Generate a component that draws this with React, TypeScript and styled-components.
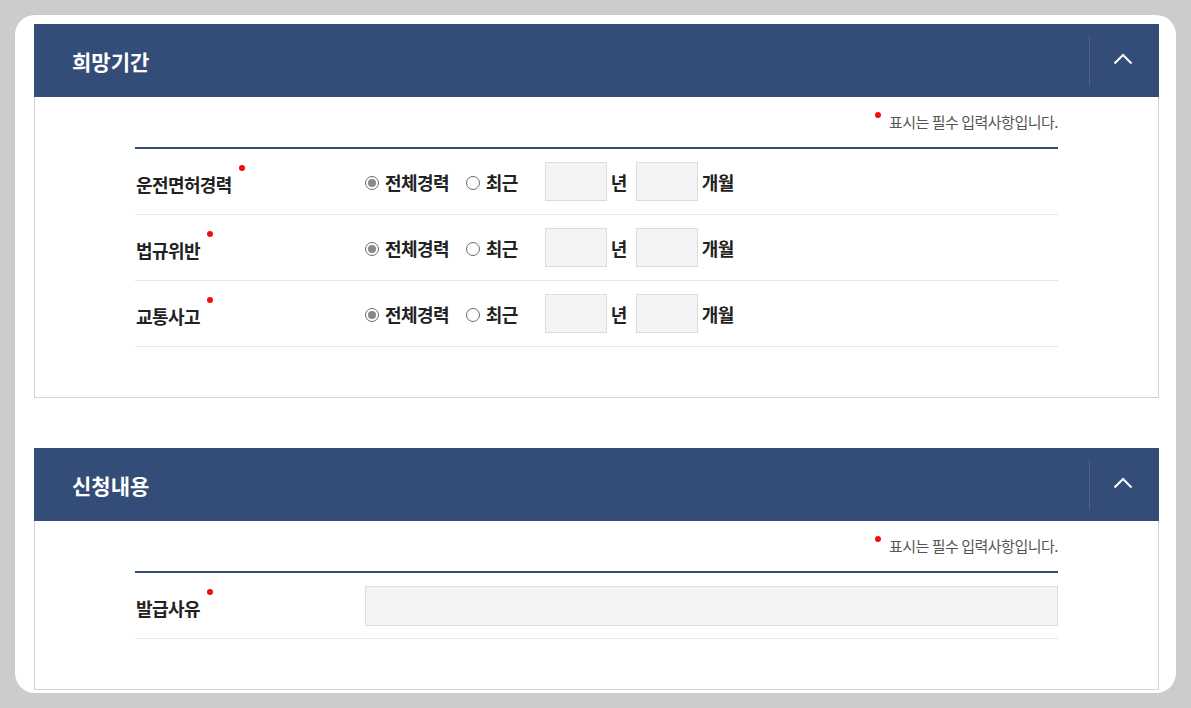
import React from 'react';
import styled, { createGlobalStyle } from 'styled-components';

const GlobalStyle = createGlobalStyle`
	html, body {
		margin: 0;
		padding: 0;
		background: #cccccc;
	}
	body {
		font-family: 'Noto Sans CJK KR', 'Noto Sans', sans-serif;
		color: #222;
	}
`;

type RowData = { label: string };

const periodRows: RowData[] = [{ label: '운전면허경력' }, { label: '법규위반' }, { label: '교통사고' }];

function ChevronUp() {
	return (
		<svg width="20" height="12" viewBox="0 0 20 12" fill="none">
			<path d="M1.5 10.5 L10 2 L18.5 10.5" stroke="#fff" strokeWidth="2" />
		</svg>
	);
}

function Section({ title, children }: { title: string; children: React.ReactNode }) {
	return (
		<SectionBox>
			<SectionHeader>
				<SectionTitle>{title}</SectionTitle>
				<ToggleButton type="button" aria-label="접기">
					<ChevronUp />
				</ToggleButton>
			</SectionHeader>
			<SectionBody>
				<RequiredNote>
					<Dot />
					표시는 필수 입력사항입니다.
				</RequiredNote>
				<FormTable>{children}</FormTable>
			</SectionBody>
		</SectionBox>
	);
}

export default function App() {
	return (
		<>
			<GlobalStyle />
			<Page>
				<Card>
					<Section title="희망기간">
						{periodRows.map((row) => (
							<FormRow key={row.label}>
								<Label>
									{row.label}
									<Dot $label />
								</Label>
								<Field>
									<RadioOption>
										<Radio $checked />
										전체경력
									</RadioOption>
									<RadioOption>
										<Radio />
										최근
									</RadioOption>
									<SmallInput $first />
									<Unit>년</Unit>
									<SmallInput />
									<Unit>개월</Unit>
								</Field>
							</FormRow>
						))}
					</Section>
					<Section title="신청내용">
						<FormRow>
							<Label>
								발급사유
								<Dot $label />
							</Label>
							<Field>
								<WideInput />
							</Field>
						</FormRow>
					</Section>
				</Card>
			</Page>
		</>
	);
}

const Page = styled.div`
	padding: 15px 15px 0;
	height: 708px;
	box-sizing: border-box;
	overflow: hidden;
`;

const Card = styled.div`
	background: #fff;
	border-radius: 20px;
	height: 678px;
	padding: 9px 17px 0 19px;
	box-sizing: border-box;
	display: flex;
	flex-direction: column;
	gap: 50px;
	overflow: hidden;
`;

const SectionBox = styled.section`
	display: flex;
	flex-direction: column;
`;

const SectionHeader = styled.div`
	height: 73px;
	background: #344d78;
	display: flex;
	align-items: center;
	justify-content: space-between;
	padding-left: 38px;
`;

const SectionTitle = styled.h2`
	margin: 0;
	color: #fff;
	font-size: 21px;
	font-weight: 700;
	letter-spacing: 0;
`;

const ToggleButton = styled.button`
	width: 70px;
	height: 50px;
	background: transparent;
	border: 0;
	border-left: 1px solid #4c628b;
	display: flex;
	align-items: center;
	justify-content: center;
	padding: 0 4px 4px 0;
	cursor: pointer;
`;

const SectionBody = styled.div`
	border: 1px solid #d4d4d4;
	border-top: 0;
	padding: 15px 100px 50px;
	display: flex;
	flex-direction: column;
	align-items: stretch;
`;

const RequiredNote = styled.p`
	margin: 0 0 15px;
	text-align: right;
	font-size: 15px;
	color: #555;
	letter-spacing: -0.5px;
	line-height: 20px;
	span {
		position: relative;
		top: 0;
		margin-right: 8px;
	}
`;

const Dot = styled.span<{ $label?: boolean }>`
	display: inline-block;
	width: 6px;
	height: 6px;
	border-radius: 50%;
	background: #f00e0e;
	vertical-align: top;
	${(p) => (p.$label ? 'position: relative; top: -6px; margin-left: 7px;' : '')}
`;

const FormTable = styled.div`
	border-top: 2px solid #344d78;
`;

const FormRow = styled.div`
	display: grid;
	grid-template-columns: 230px 1fr;
	align-items: center;
	min-height: 65px;
	border-bottom: 1px solid #e6e6e6;
`;

const Label = styled.div`
	font-size: 18px;
	font-weight: 700;
	color: #222;
	letter-spacing: -0.6px;
	padding-left: 1px;
	padding-top: 5px;
`;

const Field = styled.div`
	display: flex;
	align-items: center;
`;

const RadioOption = styled.label`
	display: flex;
	align-items: center;
	gap: 6px;
	font-size: 18px;
	font-weight: 700;
	color: #222;
	letter-spacing: -0.6px;
	margin-right: 17px;
`;

const Radio = styled.span<{ $checked?: boolean }>`
	width: 14px;
	height: 14px;
	border-radius: 50%;
	border: 1px solid #6b6b6b;
	box-sizing: border-box;
	position: relative;
	margin-top: 2px;
	&::after {
		content: '';
		display: ${(p) => (p.$checked ? 'block' : 'none')};
		position: absolute;
		inset: 2px;
		border-radius: 50%;
		background: #888;
	}
`;

const SmallInput = styled.div<{ $first?: boolean }>`
	width: 62px;
	height: 39px;
	box-sizing: border-box;
	background: #f4f4f4;
	border: 1px solid #dcdcdc;
	margin-left: ${(p) => (p.$first ? '10px' : '0')};
	margin-right: 4px;
`;

const Unit = styled.span`
	font-size: 18px;
	font-weight: 700;
	color: #222;
	letter-spacing: -0.6px;
	margin-right: 9px;
`;

const WideInput = styled.div`
	flex: 1;
	height: 40px;
	box-sizing: border-box;
	background: #f4f4f4;
	border: 1px solid #dcdcdc;
`;
